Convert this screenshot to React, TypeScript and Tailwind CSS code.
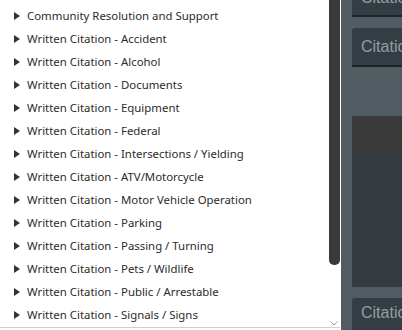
import React from "react";

const items = [
  "Community Resolution and Support",
  "Written Citation - Accident",
  "Written Citation - Alcohol",
  "Written Citation - Documents",
  "Written Citation - Equipment",
  "Written Citation - Federal",
  "Written Citation - Intersections / Yielding",
  "Written Citation - ATV/Motorcycle",
  "Written Citation - Motor Vehicle Operation",
  "Written Citation - Parking",
  "Written Citation - Passing / Turning",
  "Written Citation - Pets / Wildlife",
  "Written Citation - Public / Arrestable",
  "Written Citation - Signals / Signs",
];

export default function App() {
  return (
    <div className="flex h-[330px] w-[402px] overflow-hidden bg-[#505c62]">
      <div
        className="relative h-[330px] w-[341px] shrink-0 overflow-hidden bg-white border-r border-white"
        style={{ fontFamily: '"Noto Sans", "Open Sans", sans-serif' }}
      >
        <div className="h-[328px] border-b border-[#cfcfcf] pt-[4px]">
          {items.map((t) => (
            <div key={t} className="flex h-[23px] items-center text-[11.4px] text-[#2b2b2b]">
              <svg className="ml-[14px] mr-[7px] shrink-0" width="6" height="8" viewBox="0 0 6 8">
                <path d="M0 0 L6 4 L0 8 Z" fill="#333" />
              </svg>
              <span className="whitespace-nowrap">{t}</span>
            </div>
          ))}
        </div>
        <div className="absolute right-0 top-0 h-[265px] w-[11px] rounded-b-[5px] bg-[#3a3a3a]" />
        <svg className="absolute right-[2px] top-[321px]" width="8" height="5" viewBox="0 0 8 5">
          <path d="M0.5 0.5 L4 4 L7.5 0.5" fill="none" stroke="#9a9a9a" strokeWidth="1" />
        </svg>
      </div>
      <div
        className="flex flex-1 flex-col overflow-hidden pl-[11px]"
        style={{ fontFamily: '"Liberation Sans", Arial, sans-serif' }}
      >
        <div className="mt-[-22px] flex h-[39px] shrink-0 items-start rounded-tl-[3px] border-b-2 border-[#1f2326] bg-[#343d43] pl-[9px] pt-[8px] text-[16px] text-[#959ea2]">
          Citation
        </div>
        <div className="mt-[11px] flex h-[39px] shrink-0 items-center rounded-tl-[3px] border-b-2 border-[#1f2326] bg-[#343d43] pl-[9px] text-[16px] text-[#959ea2]">
          Citation
        </div>
        <div className="mt-[49px] h-[171px] shrink-0 bg-[#343c42]">
          <div className="h-[35px] bg-[#3a3a3a]" />
        </div>
        <div className="mt-[11px] flex h-[40px] shrink-0 items-start rounded-tl-[3px] bg-[#343d43] pl-[9px] pt-[3px] text-[16px] text-[#959ea2]">
          Citation
        </div>
      </div>
    </div>
  );
}
